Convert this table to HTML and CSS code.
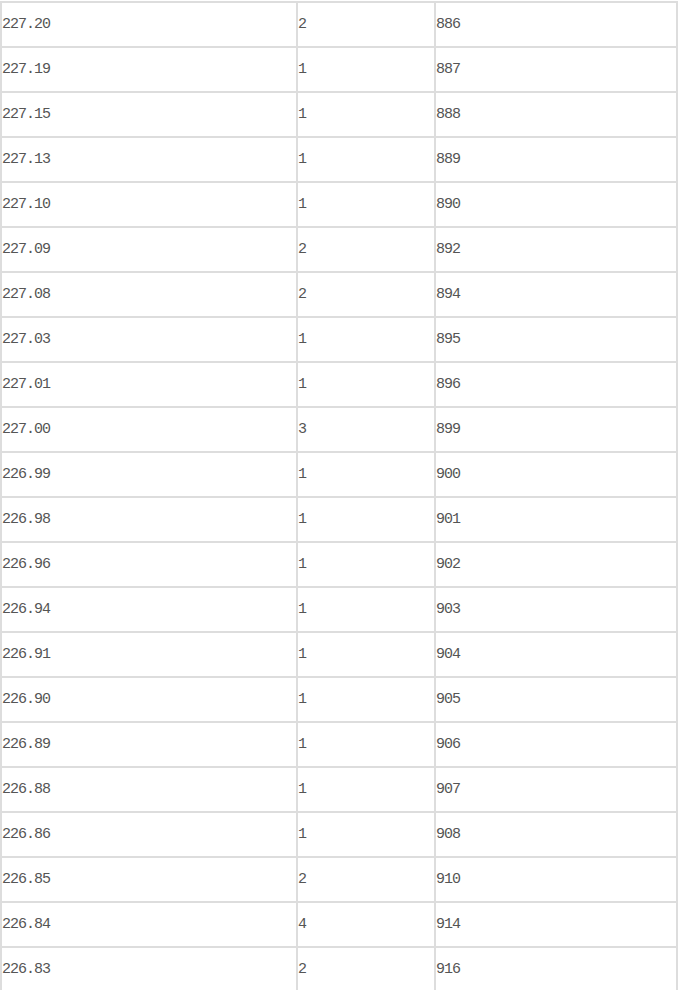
FILE: index.html
```html
<!DOCTYPE html>
<html lang="zh">
<head>
<meta charset="utf-8">
<title>成交明细</title>
<link rel="stylesheet" href="styles.css">
</head>
<body>
<table class="deals">
  <colgroup>
    <col class="c-price">
    <col class="c-vol">
    <col class="c-total">
  </colgroup>
  <tbody>
    <tr><td>227.20</td><td>2</td><td>886</td></tr>
    <tr><td>227.19</td><td>1</td><td>887</td></tr>
    <tr><td>227.15</td><td>1</td><td>888</td></tr>
    <tr><td>227.13</td><td>1</td><td>889</td></tr>
    <tr><td>227.10</td><td>1</td><td>890</td></tr>
    <tr><td>227.09</td><td>2</td><td>892</td></tr>
    <tr><td>227.08</td><td>2</td><td>894</td></tr>
    <tr><td>227.03</td><td>1</td><td>895</td></tr>
    <tr><td>227.01</td><td>1</td><td>896</td></tr>
    <tr><td>227.00</td><td>3</td><td>899</td></tr>
    <tr><td>226.99</td><td>1</td><td>900</td></tr>
    <tr><td>226.98</td><td>1</td><td>901</td></tr>
    <tr><td>226.96</td><td>1</td><td>902</td></tr>
    <tr><td>226.94</td><td>1</td><td>903</td></tr>
    <tr><td>226.91</td><td>1</td><td>904</td></tr>
    <tr><td>226.90</td><td>1</td><td>905</td></tr>
    <tr><td>226.89</td><td>1</td><td>906</td></tr>
    <tr><td>226.88</td><td>1</td><td>907</td></tr>
    <tr><td>226.86</td><td>1</td><td>908</td></tr>
    <tr><td>226.85</td><td>2</td><td>910</td></tr>
    <tr><td>226.84</td><td>4</td><td>914</td></tr>
    <tr><td>226.83</td><td>2</td><td>916</td></tr>
  </tbody>
</table>
</body>
</html>
```
FILE: styles.css
```css
html, body {
  margin: 0;
  padding: 0;
  background: #ffffff;
}

body {
  padding-top: 1px;
}

.deals {
  width: 678px;
  table-layout: fixed;
  border-collapse: separate;
  border-spacing: 2px;
  background: #dddddd;
  font-family: "Liberation Mono", "Noto Sans CJK SC", monospace;
  font-size: 15px;
  letter-spacing: -1px;
  color: #555555;
}

.c-price { width: 294px; }
.c-vol { width: 136px; }
.c-total { width: 240px; }

.deals td {
  background: #ffffff;
  height: 43px;
  padding: 0;
  vertical-align: middle;
  line-height: 16px;
  text-align: left;
  white-space: nowrap;
}
```
